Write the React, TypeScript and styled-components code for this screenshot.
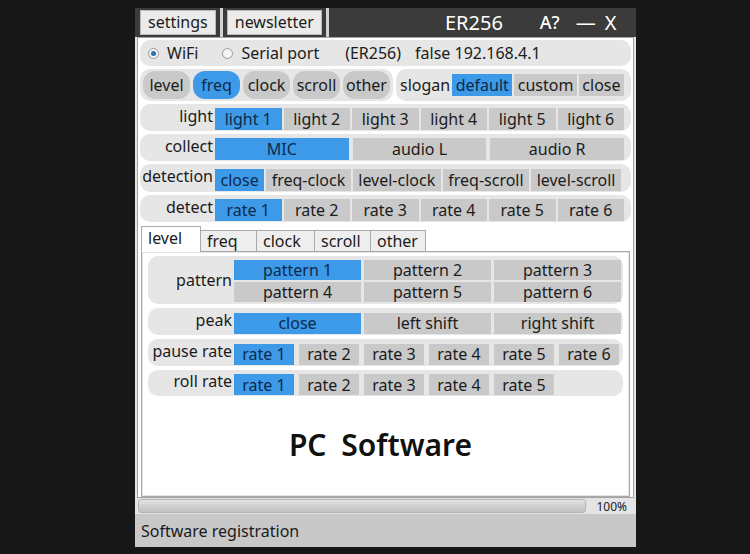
import React from 'react';
import styled, { createGlobalStyle, css } from 'styled-components';

const FONT = `"Noto Sans", "Open Sans", "Noto Sans CJK SC", sans-serif`;
const BLUE = '#3d9ae8';
const GRAY = '#c9c9c9';
const BAR = '#e6e6e6';

const GlobalStyle = createGlobalStyle`
  html, body {
    margin: 0;
    padding: 0;
    background: #171717;
    font-family: ${FONT};
    color: #1b1b1b;
  }
`;

const Page = styled.div`
  width: 750px;
  height: 554px;
  display: flex;
  padding: 8px 0 0 135px;
  box-sizing: border-box;
`;

const Window = styled.div`
  width: 501px;
  height: 539px;
  background: #e4e4e4;
  display: flex;
  flex-direction: column;
`;

const TitleBar = styled.div`
  height: 29px;
  background: #3b3b3b;
  display: flex;
  align-items: center;
  padding-left: 5px;
  color: #fff;
`;

const MenuButton = styled.div`
  height: 25px;
  box-sizing: border-box;
  background: #ebebeb;
  border: 1px solid #b9b9b9;
  color: #1b1b1b;
  font-size: 16px;
  line-height: 23px;
  padding: 0 7px;
`;

const Divider = styled.div`
  width: 3px;
  height: 29px;
  background: #d2d2d2;
  margin: 0 4px;
`;

const TitleText = styled.div<{ $gap: number; $size?: number }>`
  margin-left: ${p => p.$gap}px;
  font-size: ${p => p.$size ?? 20}px;
  line-height: 29px;
  font-weight: ${p => (p.$size ? 500 : 400)};
`;

const Body = styled.div`
  height: 461px;
  box-sizing: border-box;
  margin: 0 2px;
  border: 1px solid #a3a3a3;
  background: #fff;
  padding: 2px 2px 0 2px;
  display: flex;
  flex-direction: column;
  gap: 3px;
`;

const Bar = styled.div<{ $h: number; $pad?: string }>`
  height: ${p => p.$h}px;
  box-sizing: border-box;
  background: ${BAR};
  border-radius: 10px;
  display: flex;
  align-items: center;
  padding: ${p => p.$pad ?? '0 7px 0 0'};
  font-size: 16px;
`;

const RadioItem = styled.div<{ $gap?: number }>`
  display: flex;
  align-items: center;
  gap: 8px;
  margin-left: ${p => p.$gap ?? 0}px;
`;

const RadioDot = styled.span<{ $on?: boolean }>`
  width: 9px;
  height: 9px;
  border-radius: 50%;
  border: 1px solid #9a9a9a;
  background: #f4f4f4;
  position: relative;
  ${p =>
    p.$on &&
    css`
      &::after {
        content: '';
        position: absolute;
        left: 2px;
        top: 2px;
        width: 5px;
        height: 5px;
        border-radius: 50%;
        background: #2a6fb8;
      }
    `}
`;

const Plain = styled.span<{ $gap?: number }>`
  margin-left: ${p => p.$gap ?? 0}px;
  white-space: nowrap;
`;

const SplitRow = styled.div`
  display: flex;
  gap: 3px;
  height: 32px;
`;

const Pill = styled.div<{ $on?: boolean }>`
  height: 28px;
  width: 47px;
  border-radius: 12px;
  background: ${p => (p.$on ? BLUE : GRAY)};
  color: ${p => (p.$on ? '#0d2a4d' : '#1b1b1b')};
  display: flex;
  align-items: center;
  justify-content: center;
  font-size: 16px;
`;

const Label = styled.div<{ $w: number }>`
  width: ${p => p.$w}px;
  flex: none;
  text-align: right;
  padding-right: 2px;
  box-sizing: border-box;
  align-self: center;
  margin-top: -4px;
  white-space: nowrap;
`;

const Buttons = styled.div<{ $gap?: number }>`
  flex: 1;
  display: flex;
  gap: ${p => p.$gap ?? 2}px;
`;

const Btn = styled.div<{ $on?: boolean; $auto?: boolean; $w?: number; $h?: number; $flat?: boolean }>`
  height: ${p => p.$h ?? 22}px;
  background: ${p => (p.$on ? BLUE : GRAY)};
  color: ${p => (p.$on ? '#0d2a4d' : '#1b1b1b')};
  display: flex;
  align-items: center;
  justify-content: center;
  white-space: nowrap;
  font-size: 16px;
  margin-top: ${p => (p.$flat ? 0 : 3)}px;
  ${p =>
    p.$w
      ? css`
          flex: 0 0 ${p.$w}px;
        `
      : p.$auto
      ? css`
          flex: 1 1 auto;
        `
      : css`
          flex: 1 1 0;
        `}
`;

const Grid = styled.div`
  flex: 1;
  display: grid;
  grid-template-columns: repeat(3, 1fr);
  gap: 2px 3px;
  align-self: stretch;
  padding: 4px 0 2px 0;
`;

const GridBtn = styled.div<{ $on?: boolean }>`
  height: 20px;
  background: ${p => (p.$on ? BLUE : GRAY)};
  color: ${p => (p.$on ? '#0d2a4d' : '#1b1b1b')};
  display: flex;
  align-items: center;
  justify-content: center;
  font-size: 16px;
`;

const TabArea = styled.div`
  display: flex;
  flex-direction: column;
  flex: 1;
`;

const TabStrip = styled.div`
  display: flex;
  align-items: flex-end;
  height: 26px;
  margin-top: 1px;
  padding-left: 1px;
  position: relative;
  z-index: 1;
  margin-bottom: -1px;
`;

const Tab = styled.div<{ $on?: boolean; $w: number }>`
  width: ${p => p.$w}px;
  box-sizing: border-box;
  height: ${p => (p.$on ? 26 : 22)}px;
  background: ${p => (p.$on ? '#fff' : '#eeeeee')};
  border: 1px solid #a9a9a9;
  border-bottom: ${p => (p.$on ? '1px solid #fff' : '1px solid #a9a9a9')};
  font-size: 16px;
  line-height: ${p => (p.$on ? 22 : 20)}px;
  padding-left: 6px;
  margin-right: -1px;
`;

const Panel = styled.div`
  flex: 1;
  margin: 0 1px 0 1px;
  border: 1px solid #a9a9a9;
  box-shadow: inset 0 0 0 1px #e4e4e4;
  padding: 4px 6px 0 6px;
  display: flex;
  flex-direction: column;
  gap: 4px;
`;

const Banner = styled.div`
  flex: 1;
  display: flex;
  align-items: center;
  justify-content: center;
  font-size: 30px;
  font-weight: 600;
  word-spacing: 7px;
  color: #111;
  padding: 0 10px 8px 0;
`;

const ProgressRow = styled.div`
  height: 16px;
  display: flex;
  align-items: center;
  padding: 0 9px 0 3px;
  gap: 10px;
`;

const Track = styled.div`
  flex: 1;
  height: 12px;
  border-radius: 3px;
  border: 1px solid #b4b4b4;
  background: linear-gradient(#e4e4e4, #cfcfcf 55%, #c2c2c2);
`;

const Percent = styled.div`
  font-size: 12px;
  color: #222;
`;

const StatusBar = styled.div`
  flex: 1;
  background: #c8c8c8;
  display: flex;
  align-items: center;
  padding-left: 6px;
  font-size: 16px;
`;

const tabs = [
  { t: 'level', w: 60 },
  { t: 'freq', w: 57 },
  { t: 'clock', w: 59 },
  { t: 'scroll', w: 57 },
  { t: 'other', w: 56 },
];

const rates = (n: number) => Array.from({ length: n }, (_, i) => `rate ${i + 1}`);

export default function App() {
  return (
    <Page>
      <GlobalStyle />
      <Window>
        <TitleBar>
          <MenuButton>settings</MenuButton>
          <Divider />
          <MenuButton>newsletter</MenuButton>
          <Divider />
          <TitleText $gap={112}>ER256</TitleText>
          <TitleText $gap={37} $size={18}>A?</TitleText>
          <TitleText $gap={16}>—</TitleText>
          <TitleText $gap={9}>X</TitleText>
        </TitleBar>

        <Body>
          <Bar $h={26} $pad="0 0 0 8px">
            <RadioItem>
              <RadioDot $on />
              <span>WiFi</span>
            </RadioItem>
            <RadioItem $gap={24}>
              <RadioDot />
              <span>Serial port</span>
            </RadioItem>
            <Plain $gap={26}>(ER256)</Plain>
            <Plain $gap={14}>false 192.168.4.1</Plain>
          </Bar>

          <SplitRow>
            <Bar $h={32} $pad="0 3px" style={{ gap: 3, width: 253 }}>
              <Pill>level</Pill>
              <Pill $on>freq</Pill>
              <Pill>clock</Pill>
              <Pill>scroll</Pill>
              <Pill>other</Pill>
            </Bar>
            <Bar $h={32} $pad="0 7px 0 4px" style={{ flex: 1 }}>
              <Plain style={{ marginRight: 2 }}>slogan</Plain>
              <Buttons>
                <Btn $on $auto $flat>default</Btn>
                <Btn $auto $flat>custom</Btn>
                <Btn $auto $flat>close</Btn>
              </Buttons>
            </Bar>
          </SplitRow>

          <Bar $h={27}>
            <Label $w={75}>light</Label>
            <Buttons>
              {Array.from({ length: 6 }, (_, i) => (
                <Btn key={i} $on={i === 0}>{`light ${i + 1}`}</Btn>
              ))}
            </Buttons>
          </Bar>

          <Bar $h={27}>
            <Label $w={75}>collect</Label>
            <Buttons $gap={4}>
              <Btn $on>MIC</Btn>
              <Btn>audio L</Btn>
              <Btn>audio R</Btn>
            </Buttons>
          </Bar>

          <Bar $h={28} $pad="0 10px 0 0">
            <Label $w={75}>detection</Label>
            <Buttons>
              {['close', 'freq-clock', 'level-clock', 'freq-scroll', 'level-scroll'].map((t, i) => (
                <Btn key={t} $auto $on={i === 0}>{t}</Btn>
              ))}
            </Buttons>
          </Bar>

          <Bar $h={27}>
            <Label $w={75}>detect</Label>
            <Buttons>
              {rates(6).map((t, i) => (
                <Btn key={t} $on={i === 0}>{t}</Btn>
              ))}
            </Buttons>
          </Bar>

          <TabArea>
            <TabStrip>
              {tabs.map((t, i) => (
                <Tab key={t.t} $w={t.w} $on={i === 0}>{t.t}</Tab>
              ))}
            </TabStrip>
            <Panel>
              <Bar $h={48} $pad="0 2px 0 0">
                <Label $w={86} style={{ marginTop: 0 }}>pattern</Label>
                <Grid>
                  {Array.from({ length: 6 }, (_, i) => (
                    <GridBtn key={i} $on={i === 0}>{`pattern ${i + 1}`}</GridBtn>
                  ))}
                </Grid>
              </Bar>
              <Bar $h={27} $pad="0 2px 0 0">
                <Label $w={86}>peak</Label>
                <Buttons $gap={3}>
                  <Btn $on $h={21}>close</Btn>
                  <Btn $h={21}>left shift</Btn>
                  <Btn $h={21}>right shift</Btn>
                </Buttons>
              </Bar>
              <Bar $h={27} $pad="0 2px 0 0">
                <Label $w={86}>pause rate</Label>
                <Buttons $gap={5}>
                  {rates(6).map((t, i) => (
                    <Btn key={t} $w={60} $h={21} $on={i === 0}>{t}</Btn>
                  ))}
                </Buttons>
              </Bar>
              <Bar $h={26} $pad="0 2px 0 0">
                <Label $w={86}>roll rate</Label>
                <Buttons $gap={5}>
                  {rates(5).map((t, i) => (
                    <Btn key={t} $w={60} $h={21} $on={i === 0}>{t}</Btn>
                  ))}
                </Buttons>
              </Bar>
              <Banner>PC Software</Banner>
            </Panel>
          </TabArea>
        </Body>

        <ProgressRow>
          <Track />
          <Percent>100%</Percent>
        </ProgressRow>
        <StatusBar>Software registration</StatusBar>
      </Window>
    </Page>
  );
}
